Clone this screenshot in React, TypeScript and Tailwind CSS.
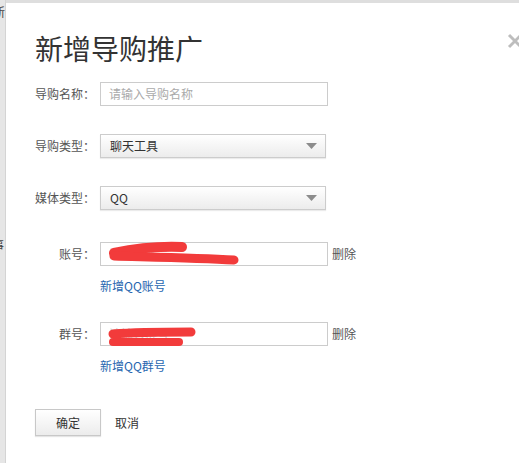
import React from 'react';

const FONT = '"Noto Sans CJK SC", "Liberation Sans", sans-serif';

function Label({ text }: { text: string }) {
  return <div className="w-[65px] shrink-0 pr-[5px] text-right text-[12px] text-[#555]">{text}</div>;
}

function Select({ value }: { value: string }) {
  return (
    <div className="flex h-[24px] w-[226px] items-center justify-between border border-[#ccc] bg-gradient-to-b from-white to-[#ececec] pl-[9px] pr-[8px] text-[12px] text-[#333] shadow-[0_1px_1px_rgba(0,0,0,0.08)]">
      <span>{value}</span>
      <svg width="11" height="6" viewBox="0 0 11 6"><path d="M0 0h11L5.5 6z" fill="#8c8c8c" /></svg>
    </div>
  );
}

// red marker strokes covering the account numbers
function Scribble({ kind }: { kind: 1 | 2 }) {
  return kind === 1 ? (
    <svg className="pointer-events-none absolute left-[7px] top-[-1px] overflow-visible" width="140" height="28" viewBox="0 0 140 28">
      <path d="M6 11 C25 7, 50 4, 74 5" stroke="#f23b3b" strokeWidth="10" strokeLinecap="round" fill="none" />
      <path d="M6 14 C40 15, 90 16, 126 18" stroke="#f23b3b" strokeWidth="9" strokeLinecap="round" fill="none" />
    </svg>
  ) : (
    <svg className="pointer-events-none absolute left-[7px] top-[-1px] overflow-visible" width="100" height="28" viewBox="0 0 100 28">
      <path d="M5 12 C30 10, 60 10, 83 10" stroke="#f23b3b" strokeWidth="9" strokeLinecap="round" fill="none" />
      <path d="M5 20 C30 20, 52 20, 71 20" stroke="#f23b3b" strokeWidth="8" strokeLinecap="round" fill="none" />
    </svg>
  );
}

function Account({ label, hint, kind }: { label: string; hint: string; kind: 1 | 2 }) {
  return (
    <div className="flex items-center">
      <Label text={label} />
      <div className="relative h-[24px] w-[228px] border border-[#ccc] bg-white">
        <div className="pl-[8px] text-[12px] leading-[22px] text-[#ccc]">{hint}</div>
        <Scribble kind={kind} />
      </div>
      <span className="ml-[4px] text-[12px] text-[#555]">删除</span>
    </div>
  );
}

export default function App() {
  return (
    <div className="flex h-[463px] w-[519px] overflow-hidden bg-white" style={{ fontFamily: FONT }}>
      <div className="relative w-[6px] shrink-0 overflow-hidden border-r border-[#d4d4d4] bg-[#e6e6e6] text-[12px] text-[#444]">
        <div className="absolute -left-[7px] top-[3px]">新</div>
        <div className="absolute -left-[8px] top-[236px]">事</div>
      </div>
      <div className="relative flex-1 border-t-[3px] border-[#dedede] pl-[29px]">
        <svg className="absolute right-[-4px] top-[30px]" width="16" height="16" viewBox="0 0 16 16">
          <path d="M2 2L14 14M14 2L2 14" stroke="#bdbdbd" strokeWidth="3" />
        </svg>
        <h1 className="mt-[29px] text-[28px] leading-[32px] text-[#333]">新增导购推广</h1>
        <div className="mt-[18px] flex items-center">
          <Label text="导购名称：" />
          <div className="h-[24px] w-[228px] border border-[#ccc] pl-[8px] text-[12px] leading-[22px] text-[#aaa]">请输入导购名称</div>
        </div>
        <div className="mt-[28px] flex items-center">
          <Label text="导购类型：" />
          <Select value="聊天工具" />
        </div>
        <div className="mt-[28px] flex items-center">
          <Label text="媒体类型：" />
          <Select value="QQ" />
        </div>
        <div className="mt-[32px]">
          <Account label="账号：" hint="请输入账号" kind={1} />
        </div>
        <div className="ml-[65px] mt-[11px] text-[12px] text-[#2766b0]">新增QQ账号</div>
        <div className="mt-[27px]">
          <Account label="群号：" hint="请输入群号" kind={2} />
        </div>
        <div className="ml-[65px] mt-[11px] text-[12px] text-[#2766b0]">新增QQ群号</div>
        <div className="mt-[34px] flex items-center">
          <button className="h-[27px] w-[66px] border border-[#c8c8c8] bg-gradient-to-b from-white to-[#ececec] text-[12px] text-[#333] shadow-[0_1px_1px_rgba(0,0,0,0.1)]">确定</button>
          <span className="ml-[14px] text-[12px] text-[#333]">取消</span>
        </div>
      </div>
    </div>
  );
}
